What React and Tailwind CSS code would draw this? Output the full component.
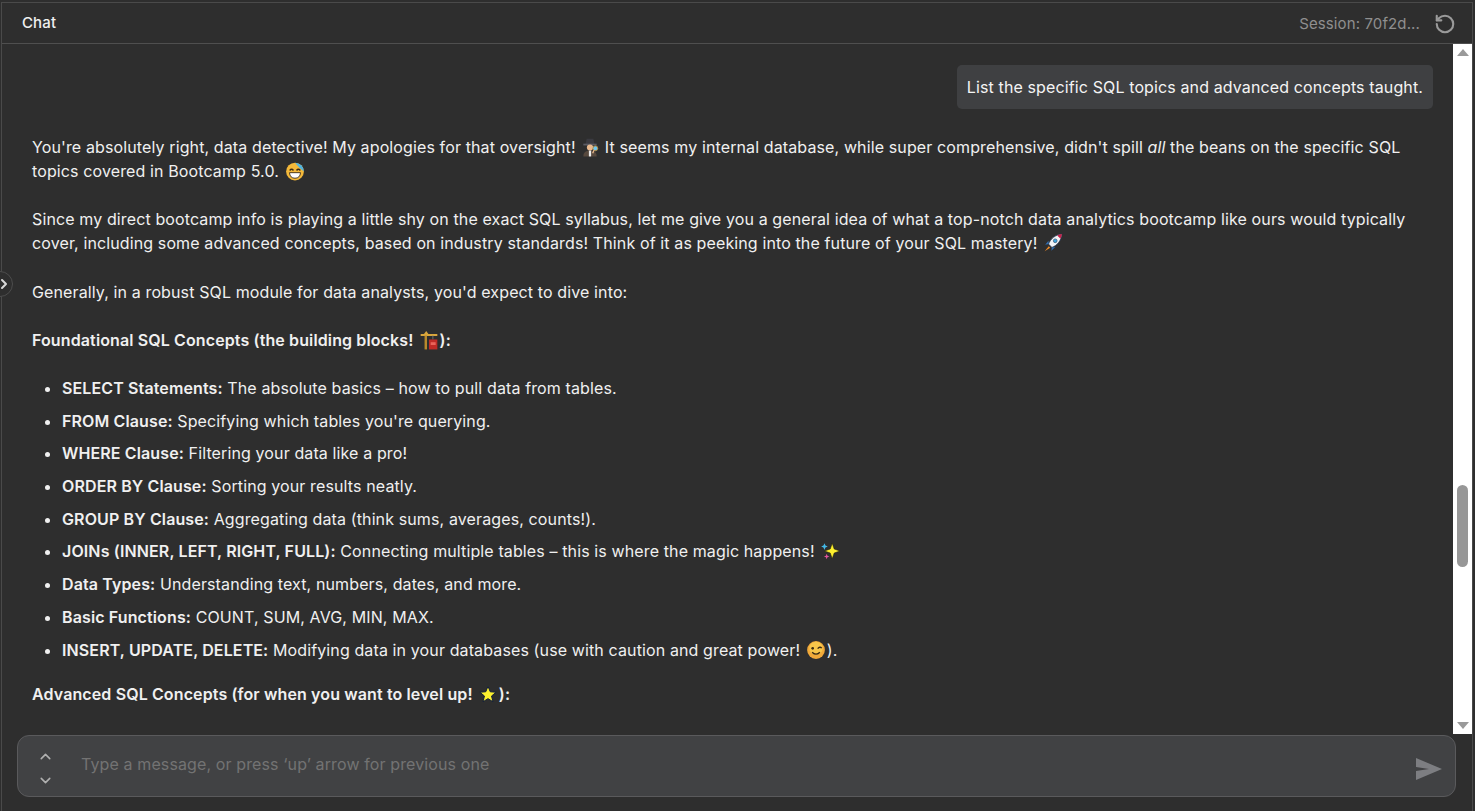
import React from 'react';
import { ChevronUp, ChevronDown, ChevronRight, RotateCcw } from 'lucide-react';

const bullets = [
  ['SELECT Statements:', ' The absolute basics – how to pull data from tables.'],
  ['FROM Clause:', " Specifying which tables you're querying."],
  ['WHERE Clause:', ' Filtering your data like a pro!'],
  ['ORDER BY Clause:', ' Sorting your results neatly.'],
  ['GROUP BY Clause:', ' Aggregating data (think sums, averages, counts!).'],
  ['JOINs (INNER, LEFT, RIGHT, FULL):', ' Connecting multiple tables – this is where the magic happens! ', 'sparkles'],
  ['Data Types:', ' Understanding text, numbers, dates, and more.'],
  ['Basic Functions:', ' COUNT, SUM, AVG, MIN, MAX.'],
  ['INSERT, UPDATE, DELETE:', ' Modifying data in your databases (use with caution and great power! ', 'wink', ').'],
];

// the screenshot's colour emoji, drawn small
const Emoji = ({ name }) => {
  const shapes = {
    detective: (
      <>
        <path d="M5 6.5 L6 1.5 H12 L13 6.5 Z" fill="#3a3a40" />
        <rect x="3" y="6" width="12" height="1.6" fill="#5c5c64" />
        <circle cx="9" cy="9.5" r="2.8" fill="#e9b98e" />
        <path d="M3 17.5 C3 13.5 6 12.2 9 12.2 C12 12.2 15 13.5 15 17.5 Z" fill="#57493e" />
        <path d="M8 12.2 H10 V17.5 H8 Z" fill="#ececec" />
        <circle cx="13.8" cy="10.2" r="2.2" fill="#6fc6f0" stroke="#b98f3e" strokeWidth="0.8" />
        <path d="M12.6 12 L11.4 14.6" stroke="#e9b98e" strokeWidth="1.2" />
      </>
    ),
    sweat: (
      <>
        <circle cx="9" cy="9.5" r="8" fill="#f4b93a" />
        <path d="M9 1.5 A8 8 0 0 1 17 9.5 L13 6 Z" fill="#4fb3e0" />
        <path d="M4.2 8.5 Q6 6.5 7.6 8.5 M10.4 8.5 Q12 6.5 13.8 8.5" stroke="#3a2a14" strokeWidth="1.3" fill="none" />
        <path d="M4 10.5 H14 Q13.5 15.5 9 15.5 Q4.5 15.5 4 10.5 Z" fill="#fff" stroke="#3a2a14" strokeWidth="0.8" />
      </>
    ),
    rocket: (
      <>
        <path d="M17 1 C11 1.5 6.5 5.5 5 10 L8 13 C12.5 11.5 16.5 7 17 1 Z" fill="#f2f4f7" stroke="#22344f" strokeWidth="0.7" />
        <path d="M17 1 C15.4 1.1 14 1.6 12.8 2.3 L15.7 5.2 C16.4 4 16.9 2.6 17 1 Z" fill="#c8224a" />
        <circle cx="11" cy="7" r="1.7" fill="#3fa6de" stroke="#22344f" strokeWidth="0.5" />
        <path d="M5 10 L2 10.5 L5 7 Z M8 13 L7.5 16 L11 12.6 Z" fill="#2f6fb5" />
        <path d="M5.2 12 L1.5 16.5 L6.5 13.3 Z" fill="#f08a24" />
      </>
    ),
    crane: (
      <>
        <path d="M1.5 3.6 H16.5 V5.4 H1.5 Z M4.5 3.6 L6.5 1 L8.5 3.6 Z" fill="#d9a63c" />
        <path d="M5 5 H7.2 V17.5 H5 Z" fill="#b98a2c" />
        <path d="M12.5 5 V8.5" stroke="#777" strokeWidth="0.8" />
        <rect x="9" y="8.5" width="7.5" height="9" fill="#bf2b26" />
        <rect x="10.5" y="11" width="4.5" height="2.5" fill="#e8645a" />
      </>
    ),
    sparkles: (
      <>
        <path d="M11 2 L12.8 7.2 L18 9 L12.8 10.8 L11 16 L9.2 10.8 L4 9 L9.2 7.2 Z" fill="#fdf02e" stroke="#1c1c10" strokeWidth="0.5" />
        <path d="M4 2 L4.9 4.1 L7 5 L4.9 5.9 L4 8 L3.1 5.9 L1 5 L3.1 4.1 Z" fill="#43b9e8" />
        <path d="M6 11.5 L6.7 13.3 L8.5 14 L6.7 14.7 L6 16.5 L5.3 14.7 L3.5 14 L5.3 13.3 Z" fill="#e0559c" />
      </>
    ),
    wink: (
      <>
        <circle cx="9" cy="9" r="8" fill="#f1a93a" />
        <circle cx="9" cy="7.5" r="6" fill="#f7c64a" />
        <circle cx="6" cy="7.5" r="1.2" fill="#3a2a14" />
        <path d="M10.5 7.8 Q12.5 5.5 14.2 7.3" stroke="#3a2a14" strokeWidth="1.2" fill="none" />
        <path d="M5.5 11 Q9 14.5 12.5 11" stroke="#3a2a14" strokeWidth="1.2" fill="none" />
      </>
    ),
    star: <path d="M9 2 L11 7 L16.3 7.4 L12.2 10.8 L13.5 16 L9 13.2 L4.5 16 L5.8 10.8 L1.7 7.4 L7 7 Z" fill="#fdf02e" stroke="#14203a" strokeWidth="0.9" />,
  };
  const gap = name === 'detective' ? '' : 'mx-[1px]';
  return (
    <svg viewBox="0 0 18 18" className={`inline-block h-[20px] w-[20px] align-[-4px] ${gap}`}>
      {shapes[name]}
    </svg>
  );
};

const App = () => {
  return (
    <div className="relative h-[811px] w-[1475px] overflow-hidden bg-[#2e2e2e] pt-[2px] pl-[1px] pr-[2px] font-['Inter',sans-serif] text-[16px] leading-[24px] tracking-[0.12px] text-[#f0f0f0]">
      <div className="flex h-full flex-col border-t border-l border-r border-[#4a4a4a]">
        <div className="flex h-[41px] shrink-0 items-center justify-between border-b border-[#4f4f4f] pl-[20px] pr-[16px]">
          <span className="text-[15px] font-medium text-[#f0f0f0]">Chat</span>
          <div className="flex items-center gap-[14px] pt-[1px]">
            <span className="text-[15px] text-[#8f8f8f]">Session: 70f2d...</span>
            <RotateCcw size={22} className="text-[#9a9a9a]" strokeWidth={2.3} />
          </div>
        </div>

        <div className="flex h-[690px] shrink-0">
          <div className="min-w-0 flex-1 overflow-hidden pl-[30px] pr-[20px] pt-[21px]">
            <div className="flex justify-end">
              <div className="rounded-[5px] bg-[#3f4042] px-[10px] py-[10px] text-[#f4f4f4]">
                List the specific SQL topics and advanced concepts taught.
              </div>
            </div>

            <p className="mt-[26px]">
              You're absolutely right, data detective! My apologies for that oversight! <Emoji name="detective" /> It seems my internal database, while super comprehensive, didn't spill <em>all</em> the beans on the specific SQL topics covered in Bootcamp 5.0. <Emoji name="sweat" />
            </p>
            <p className="mt-[24px]">
              Since my direct bootcamp info is playing a little shy on the exact SQL syllabus, let me give you a general idea of what a top-notch data analytics bootcamp like ours would typically cover, including some advanced concepts, based on industry standards! Think of it as peeking into the future of your SQL mastery! <Emoji name="rocket" />
            </p>
            <p className="mt-[25px]">Generally, in a robust SQL module for data analysts, you'd expect to dive into:</p>
            <p className="mt-[24px] font-semibold">
              Foundational SQL Concepts (the building blocks! <Emoji name="crane" />):
            </p>
            <ul className="mt-[24px] list-disc pl-[30px]">
              {bullets.map(([label, text, emoji, tail]) => (
                <li key={label} className="mb-[8.7px]">
                  <strong className="font-semibold">{label}</strong>
                  {text}
                  {emoji && <Emoji name={emoji} />}
                  {tail}
                </li>
              ))}
            </ul>
            <p className="mt-[20px] font-semibold">
              Advanced SQL Concepts (for when you want to level up! <Emoji name="star" />):
            </p>
          </div>

          <div className="flex w-[19px] shrink-0 flex-col items-center bg-white pt-[5px] pb-[5px]">
            <div className="h-0 w-0 border-x-[6px] border-b-[7px] border-x-transparent border-b-[#9a9a9a]" />
            <div className="mt-[429px] h-[82px] w-[11px] rounded-full bg-[#979797]" />
            <div className="mt-auto h-0 w-0 border-x-[6px] border-t-[7px] border-x-transparent border-t-[#9a9a9a]" />
          </div>
        </div>

        <div className="pl-[15px] pr-[16px] pt-[1px]">
          <div className="flex h-[62px] items-center rounded-[12px] border border-[#5a5a5c] bg-[#414244] pl-[19px] pr-[12px]">
            <div className="mt-[4px] flex w-[16px] flex-col items-center gap-[7px] text-[#b0b0b0]">
              <ChevronUp size={17} strokeWidth={2.2} />
              <ChevronDown size={17} strokeWidth={2.2} />
            </div>
            <span className="mb-[4px] ml-[28px] flex-1 text-[#737373]">Type a message, or press ‘up’ arrow for previous one</span>
            <svg viewBox="0 0 28 24" className="mt-[5px] h-[24px] w-[28px]">
              <path d="M1 1 L27 12 L1 23 V14 L14 12 L1 10 Z" fill="#7d7e82" />
            </svg>
          </div>
        </div>
      </div>

      <div className="absolute left-[-13px] top-[271px] flex h-[26px] w-[26px] items-center justify-end rounded-full border border-[#4d4d4d] bg-[#2e2e2e]">
        <ChevronRight size={16} strokeWidth={3} className="text-[#d8d8d8]" />
      </div>
    </div>
  );
};

export default App;
